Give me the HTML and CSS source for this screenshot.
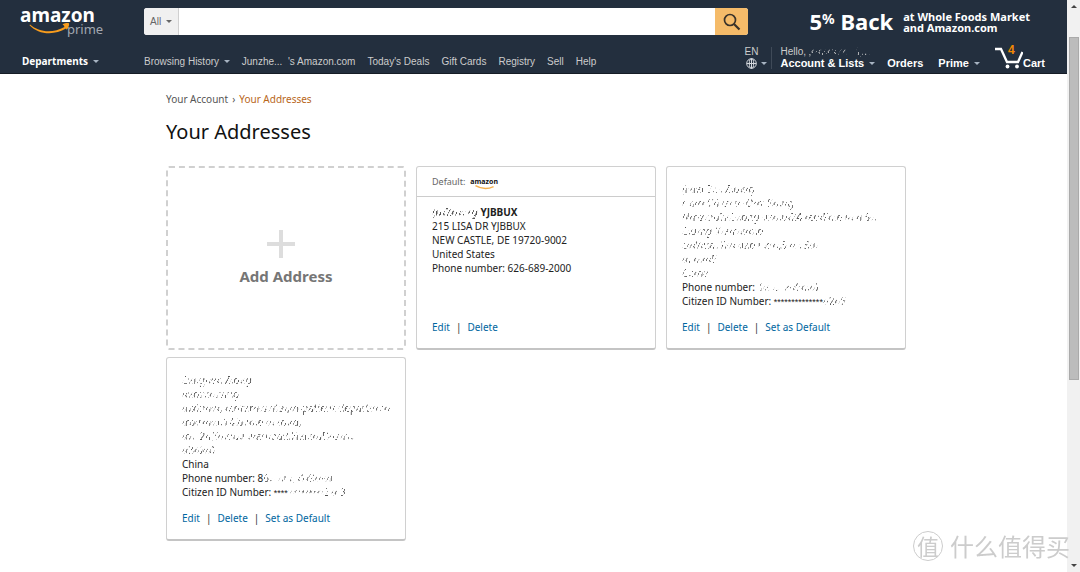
FILE: index.html
```html
<!DOCTYPE html>
<html lang="en">
<head>
<meta charset="utf-8">
<title>Your Addresses</title>
<meta name="viewport" content="width=device-width, initial-scale=1">
<link rel="stylesheet" href="styles.css">
</head>
<body>
<div class="page">
  <header class="header">
    <div class="header-top">
      <a class="logo" href="#" aria-label="amazon prime">
        <span class="logo-name">amazon</span>
        <span class="logo-prime">prime</span>
        <svg class="logo-smile" viewBox="0 0 42 12" aria-hidden="true">
          <path d="M1 2.500C10 10.500 24 11.500 35.500 5L34.800 3.600L33.500 2.200C36 1 39.500 .6 40 1.500C40.500 2.600 39.300 6 37.800 7.800L37 6.600C25 13.800 9 12.500 .5 3.200Z" fill="#f79c1d"/>
        </svg>
      </a>
      <form class="search">
        <button class="search-scope" type="button">All <span class="caret caret-dark"></span></button>
        <input class="search-input" type="text" aria-label="Search">
        <button class="search-go" type="button" aria-label="Go">
          <svg width="18" height="18" viewBox="0 0 18 18" fill="none" stroke="#3a332a" stroke-width="1.700"><circle cx="7" cy="7" r="5.500"/><path d="M11 11l5.500 5.500" stroke-width="2.200"/></svg>
        </button>
      </form>
      <a class="promo" href="#">
        <span class="promo-big">5<sup>%</sup> Back</span>
        <span class="promo-small">at Whole Foods Market<br>and Amazon.com</span>
      </a>
    </div>
    <div class="header-nav">
      <a class="departments" href="#">Departments <span class="caret"></span></a>
      <nav class="links">
        <a href="#">Browsing History <span class="caret"></span></a>
        <a href="#">Junzhe... &nbsp;'s Amazon.com</a>
        <a href="#">Today's Deals</a>
        <a href="#">Gift Cards</a>
        <a href="#">Registry</a>
        <a href="#">Sell</a>
        <a href="#">Help</a>
      </nav>
      <div class="tools">
        <a class="language" href="#"><span>EN</span>
          <span class="language-row"><svg width="11" height="11" viewBox="0 0 11 11" fill="none" stroke="#d5d9de"><circle cx="5.500" cy="5.500" r="4.800"/><ellipse cx="5.500" cy="5.500" rx="2.200" ry="4.800"/><path d="M.7 5.500h9.600M5.500 .7v9.600" /></svg><span class="caret"></span></span>
        </a>
        <a class="account" href="#"><span class="hello">Hello,<span class="scrubbed"> ‚‹·‹ı‹‹:‹.‹‹, .:i‚...</span></span><b>Account &amp; Lists <span class="caret"></span></b></a>
        <a class="tool" href="#">Orders</a>
        <a class="tool" href="#">Prime <span class="caret"></span></a>
        <a class="cart" href="#">
          <svg width="28" height="22" viewBox="0 0 28 22" aria-hidden="true"><path d="M0 2H6L12 15H23L27.500 5" fill="none" stroke="#fff" stroke-width="2.300"/><circle cx="12.500" cy="19.500" r="1.900" fill="#fff"/><circle cx="22" cy="19.500" r="1.900" fill="#fff"/></svg>
          <span class="cart-count">4</span><b>Cart</b>
        </a>
      </div>
    </div>
  </header>

  <main class="main">
    <nav class="crumbs"><a href="#">Your Account</a><span>›</span><a class="current" href="#">Your Addresses</a></nav>
    <h1>Your Addresses</h1>
    <div class="cards">
      <a class="card-add" href="#">
        <svg width="28" height="28" viewBox="0 0 28 28" aria-hidden="true"><path d="M14 0v28M0 14h28" stroke="#ddd" stroke-width="4"/></svg>
        <span>Add Address</span>
      </a>
      <section class="card">
        <div class="card-head">Default: <span class="mini-logo">amazon<svg viewBox="0 0 42 12" aria-hidden="true"><path d="M1 3Q20 14 39 5" fill="none" stroke="#f5b04d" stroke-width="3"/></svg></span></div>
        <address class="lines">
          <b><span class="scrubbed">Ju‹Z‹ı‹‹·‹g</span> YJBBUX</b>
          <span>215 LISA DR YJBBUX</span>
          <span>NEW CASTLE, DE 19720-9002</span>
          <span>United States</span>
          <span>Phone number: 626-689-2000</span>
        </address>
        <div class="actions"><a href="#">Edit</a><i>|</i><a href="#">Delete</a></div>
      </section>
      <section class="card">
        <address class="lines">
          <span class="scrubbed">Jl·‹ıei Z‹r‹ Z‹u‹ı‹g</span>
          <span class="scrubbed">r ‹ı‹r‹ C‹l ıs‹ ı‹ ·O‹‹y S‹ı‹ı‹g</span>
          <span class="scrubbed">N‹r·z‹ou?ı‹Z‹‹ong ‹ıs‹ı‹u‹Z4 ‹eo‹F‹ı‹e ı‹‹ ‹ı S‹‹</span>
          <span class="scrubbed">Z‹u‹ng X‹e‹r‹‹ı‹‹uo</span>
          <span class="scrubbed">z‹ı‹Y‹ua‹ R‹ı‹ ‹ıao ı ‹o‹‹,3 ‹‹ ‹ S‹ı‹</span>
          <span class="scrubbed">‹‹ı ‹ı‹‹‹‹5</span>
          <span class="scrubbed">C‹ı‹na</span>
          <span>Phone number: <span class="scrubbed">1‹‹ ‹.. ‹‹·‹6‹ı‹‹0</span></span>
          <span>Citizen ID Number: <span class="stars">**************</span><span class="scrubbed">‹·2‹‹6</span></span>
        </address>
        <div class="actions"><a href="#">Edit</a><i>|</i><a href="#">Delete</a><i>|</i><a href="#">Set as Default</a></div>
      </section>
      <section class="card">
        <address class="lines">
          <span class="scrubbed">Zı‹ı‹gı‹e‹ı Z‹o‹‹g</span>
          <span class="scrubbed">ı‹ı‹or‹ı‹‹rsing</span>
          <span class="scrubbed">‹uxin‹ı‹ı‹, ‹enter‹ı‹s‹ıital,‹n-patient depart‹ı‹‹ı‹ent‹,‹,</span>
          <span class="scrubbed">‹ro‹r‹‹ı‹‹ı‹14,b‹ı‹ı‹e ‹ı‹ ‹o‹‹d,</span>
          <span class="scrubbed">‹o‹. 2‹ı,Y‹ı‹ou‹ı ‹ı‹an‹oad,Hai‹ı‹uD‹ıs‹r‹‹.</span>
          <span class="scrubbed">‹‹3‹0‹‹0</span>
          <span>China</span>
          <span>Phone number: 8<span class="scrubbed">6‹· ‹‹ı ‹, ‹1‹9‹‹·‹‹ı</span></span>
          <span>Citizen ID Number: <span class="stars">****<span class="scrubbed">**********</span></span><span class="scrubbed">2 ‹‹ 3</span></span>
        </address>
        <div class="actions"><a href="#">Edit</a><i>|</i><a href="#">Delete</a><i>|</i><a href="#">Set as Default</a></div>
      </section>
    </div>
  </main>
</div>
<div class="scrollbar" aria-hidden="true"><span class="arrow-up"></span><span class="thumb"></span><span class="arrow-down"></span></div>
<div class="watermark"><span class="seal">值</span><span>什么值得买</span></div>
</body>
</html>
```

FILE: styles.css
```css
* { box-sizing: border-box; }
body {
  margin: 0;
  min-height: 100vh;
  display: flex;
  background: #fff;
  color: #222;
  font: 10px/14px "Noto Sans", "Open Sans", sans-serif;
}
a { color: inherit; text-decoration: none; }
button, input { font: inherit; border: 0; margin: 0; padding: 0; }
svg { display: block; flex: none; }
.page { flex: 1; min-width: 0; }

.header { background: #232f3e; color: #fff; border-bottom: 1px solid #151c26; }
.header-top { display: flex; height: 43px; padding: 8px 37px 0 20px; }
.logo { position: relative; width: 124px; flex: none; }
.logo-name { display: block; font: bold 19px/14px "Noto Sans", sans-serif; }
.logo-prime { position: absolute; left: 47px; top: 14px; color: #a2a8b0; font-size: 13px; line-height: 14px; }
.logo-smile { position: absolute; left: 9px; top: 14px; width: 42px; height: 12px; }
.search { flex: 1; display: flex; height: 27px; border-radius: 3px; overflow: hidden; background: #fff; }
.search-scope { width: 35px; background: #f0f0f0; color: #666; border-right: 1px solid #d0d0d0; font: 10px/14px "Liberation Sans", sans-serif; }
.search-input { flex: 1; min-width: 0; background: #fff; outline: 0; padding: 0 8px; }
.search-go { width: 33px; background: #f5bb69; display: flex; align-items: center; justify-content: center; }
.promo { display: flex; gap: 10px; margin-left: 61px; font-weight: bold; white-space: nowrap; }
.promo-big { font-size: 22px; line-height: 27px; }
.promo-big sup { font-size: 14px; line-height: 0; vertical-align: 6px; }
.promo-small { font-size: 11px; line-height: 11px; padding-top: 3px; }

.caret { display: inline-block; border: 3px solid transparent; border-top-color: #a7b4c2; border-bottom: 0; margin-left: 2px; vertical-align: 2px; }
.caret-dark { border-top-color: #666; }
.header-nav { display: flex; align-items: flex-end; height: 30px; padding: 0 22px 4px; white-space: nowrap; }
.departments { width: 122px; font-weight: bold; line-height: 16px; }
.links { display: flex; gap: 12px; color: #ccc; font: 10px/14px "Liberation Sans", sans-serif; }
.tools { display: flex; align-items: flex-end; margin-left: auto; font: bold 11px/12px "Liberation Sans", sans-serif; }
.language { display: flex; flex-direction: column; width: 27px; color: #ccc; font-weight: normal; font-size: 10px; }
.language-row { display: flex; align-items: center; gap: 2px; padding-left: 2px; }
.account { display: flex; flex-direction: column; border-left: 1px solid #3f4a58; padding-left: 8px; margin-right: 12px; }
.hello { color: #ccc; font-size: 10px; line-height: 10px; font-weight: normal; }
.tool { margin-right: 15px; }
.cart { position: relative; display: flex; align-items: flex-end; }
.cart-count { position: absolute; left: 13px; top: -3px; color: #f08804; font-size: 12px; }

.main { width: 757px; max-width: 100%; margin: 0 auto; padding: 18px 6px 24px 11px; }
.crumbs { display: flex; gap: 4px; color: #555; }
.crumbs .current { color: #b8661a; }
h1 { margin: 12px 0 20px; color: #111; font-size: 20px; line-height: 28px; font-weight: normal; }
.cards { display: grid; grid-template-columns: repeat(auto-fill, 240px); grid-auto-rows: minmax(184px, auto); gap: 7px 10px; }
.card-add { display: flex; flex-direction: column; align-items: center; justify-content: center; gap: 8px; border: 2px dashed #d0d0d0; border-radius: 3px; color: #767676; font-size: 15px; line-height: 20px; font-weight: bold; }
.card-add svg { margin-right: 10px; }
.card { display: flex; flex-direction: column; border: 1px solid #d0d0d0; border-bottom: 2px solid #c4c4c4; border-radius: 3px; padding-bottom: 14px; }
.card-head { display: flex; align-items: center; gap: 5px; height: 30px; padding: 0 15px; border-bottom: 1px solid #ccc; color: #666; font-size: 9px; }
.mini-logo { position: relative; color: #111; font-weight: bold; font-size: 7px; }
.mini-logo svg { position: absolute; left: 5px; top: 9px; width: 20px; height: 6px; }
.lines { display: flex; flex-direction: column; padding: 15px 15px 0; font-style: normal; white-space: nowrap; }
.card-head + .lines { padding-top: 8px; }
.stars { font-family: "Liberation Sans", sans-serif; font-size: 9px; line-height: 12px; }
.actions { display: flex; gap: 6px; margin-top: auto; padding: 0 15px; color: #0066a0; }
.actions i { color: #333; font-style: normal; }
.scrubbed {
  color: #555;
  -webkit-mask-image: repeating-linear-gradient(118deg, #000 0 2px, transparent 2px 4px, #000 4px 5px, transparent 5px 7px);
  mask-image: repeating-linear-gradient(118deg, #000 0 2px, transparent 2px 4px, #000 4px 5px, transparent 5px 7px);
}
.hello .scrubbed { color: #ccc; }

.scrollbar { flex: none; width: 13px; height: 100vh; position: sticky; top: 0; display: flex; flex-direction: column; align-items: center; background: #f1f1f1; }
.arrow-up, .arrow-down { border: 3px solid transparent; }
.arrow-up { border-bottom-color: #444; border-top: 0; margin: 5px 0 29px; }
.thumb { width: 10px; height: 60%; background: #bcbcbc; border: 1px solid #aaa; }
.arrow-down { border-top-color: #444; border-bottom: 0; margin: auto 0 5px; }
.watermark { position: fixed; right: 10px; bottom: 10px; display: flex; align-items: center; gap: 7px; color: #ccc; font: 24px/32px "Noto Sans CJK SC", sans-serif; }
.seal { width: 30px; height: 30px; border: 1px solid #ccc; border-radius: 50%; text-align: center; font-size: 22px; line-height: 27px; }
```
